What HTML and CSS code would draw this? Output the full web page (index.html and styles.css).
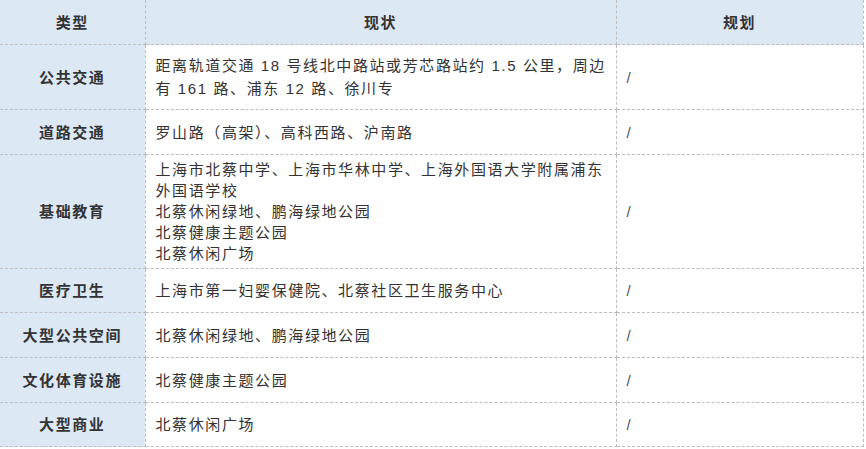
FILE: index.html
```html
<!DOCTYPE html>
<html lang="zh-CN">
<head>
<meta charset="utf-8">
<title>周边配套</title>
<link rel="stylesheet" href="styles.css">
</head>
<body>
<table class="grid">
  <colgroup>
    <col class="c-type">
    <col class="c-now">
    <col class="c-plan">
  </colgroup>
  <thead>
    <tr class="head">
      <th>类型</th>
      <th>现状</th>
      <th>规划</th>
    </tr>
  </thead>
  <tbody>
    <tr class="r-tall">
      <th>公共交通</th>
      <td>距离轨道交通 18 号线北中路站或芳芯路站约 1.5 公里，周边<br>有 161 路、浦东 12 路、徐川专</td>
      <td class="plan">/</td>
    </tr>
    <tr class="r-mid">
      <th>道路交通</th>
      <td>罗山路（高架）、高科西路、沪南路</td>
      <td class="plan">/</td>
    </tr>
    <tr class="r-multi">
      <th>基础教育</th>
      <td>上海市北蔡中学、上海市华林中学、上海外国语大学附属浦东<br>外国语学校<br>北蔡休闲绿地、鹏海绿地公园<br>北蔡健康主题公园<br>北蔡休闲广场</td>
      <td class="plan">/</td>
    </tr>
    <tr class="r-one">
      <th>医疗卫生</th>
      <td>上海市第一妇婴保健院、北蔡社区卫生服务中心</td>
      <td class="plan">/</td>
    </tr>
    <tr class="r-mid">
      <th>大型公共空间</th>
      <td>北蔡休闲绿地、鹏海绿地公园</td>
      <td class="plan">/</td>
    </tr>
    <tr class="r-mid">
      <th>文化体育设施</th>
      <td>北蔡健康主题公园</td>
      <td class="plan">/</td>
    </tr>
    <tr class="r-one">
      <th>大型商业</th>
      <td>北蔡休闲广场</td>
      <td class="plan">/</td>
    </tr>
  </tbody>
</table>
</body>
</html>
```
FILE: styles.css
```css
html, body {
  margin: 0;
  padding: 0;
  background: #ffffff;
}

.grid {
  border-collapse: collapse;
  table-layout: fixed;
  width: 863px;
  font-family: "Liberation Sans", "Noto Sans CJK SC", sans-serif;
  font-size: 15px;
  line-height: 21px;
  color: #333333;
}

.c-type { width: 145px; }
.c-now { width: 471px; }
.c-plan { width: 247px; }

.grid th,
.grid td {
  border: 1px dashed #bdbdbd;
  padding: 1px 10px;
  vertical-align: middle;
  letter-spacing: 1.6px;
}

.grid tr > :first-child { border-left: none; }
.grid thead th { border-top: none; }

.head th {
  background: #dde8f5;
  font-weight: 700;
  text-align: center;
  height: 44px;
  padding: 0 10px;
}

tbody th {
  background: #dde8f5;
  font-weight: 700;
  text-align: center;
  padding: 0 4px;
}

.grid td {
  text-align: left;
  white-space: nowrap;
}

.r-tall > * { height: 62px; line-height: 23px; }
.r-mid > * { height: 42px; }
.r-one > * { height: 41px; }
.grid .r-multi > * { padding-top: 4px; padding-bottom: 4px; }

.plan {
  color: #4a5568;
}
```
